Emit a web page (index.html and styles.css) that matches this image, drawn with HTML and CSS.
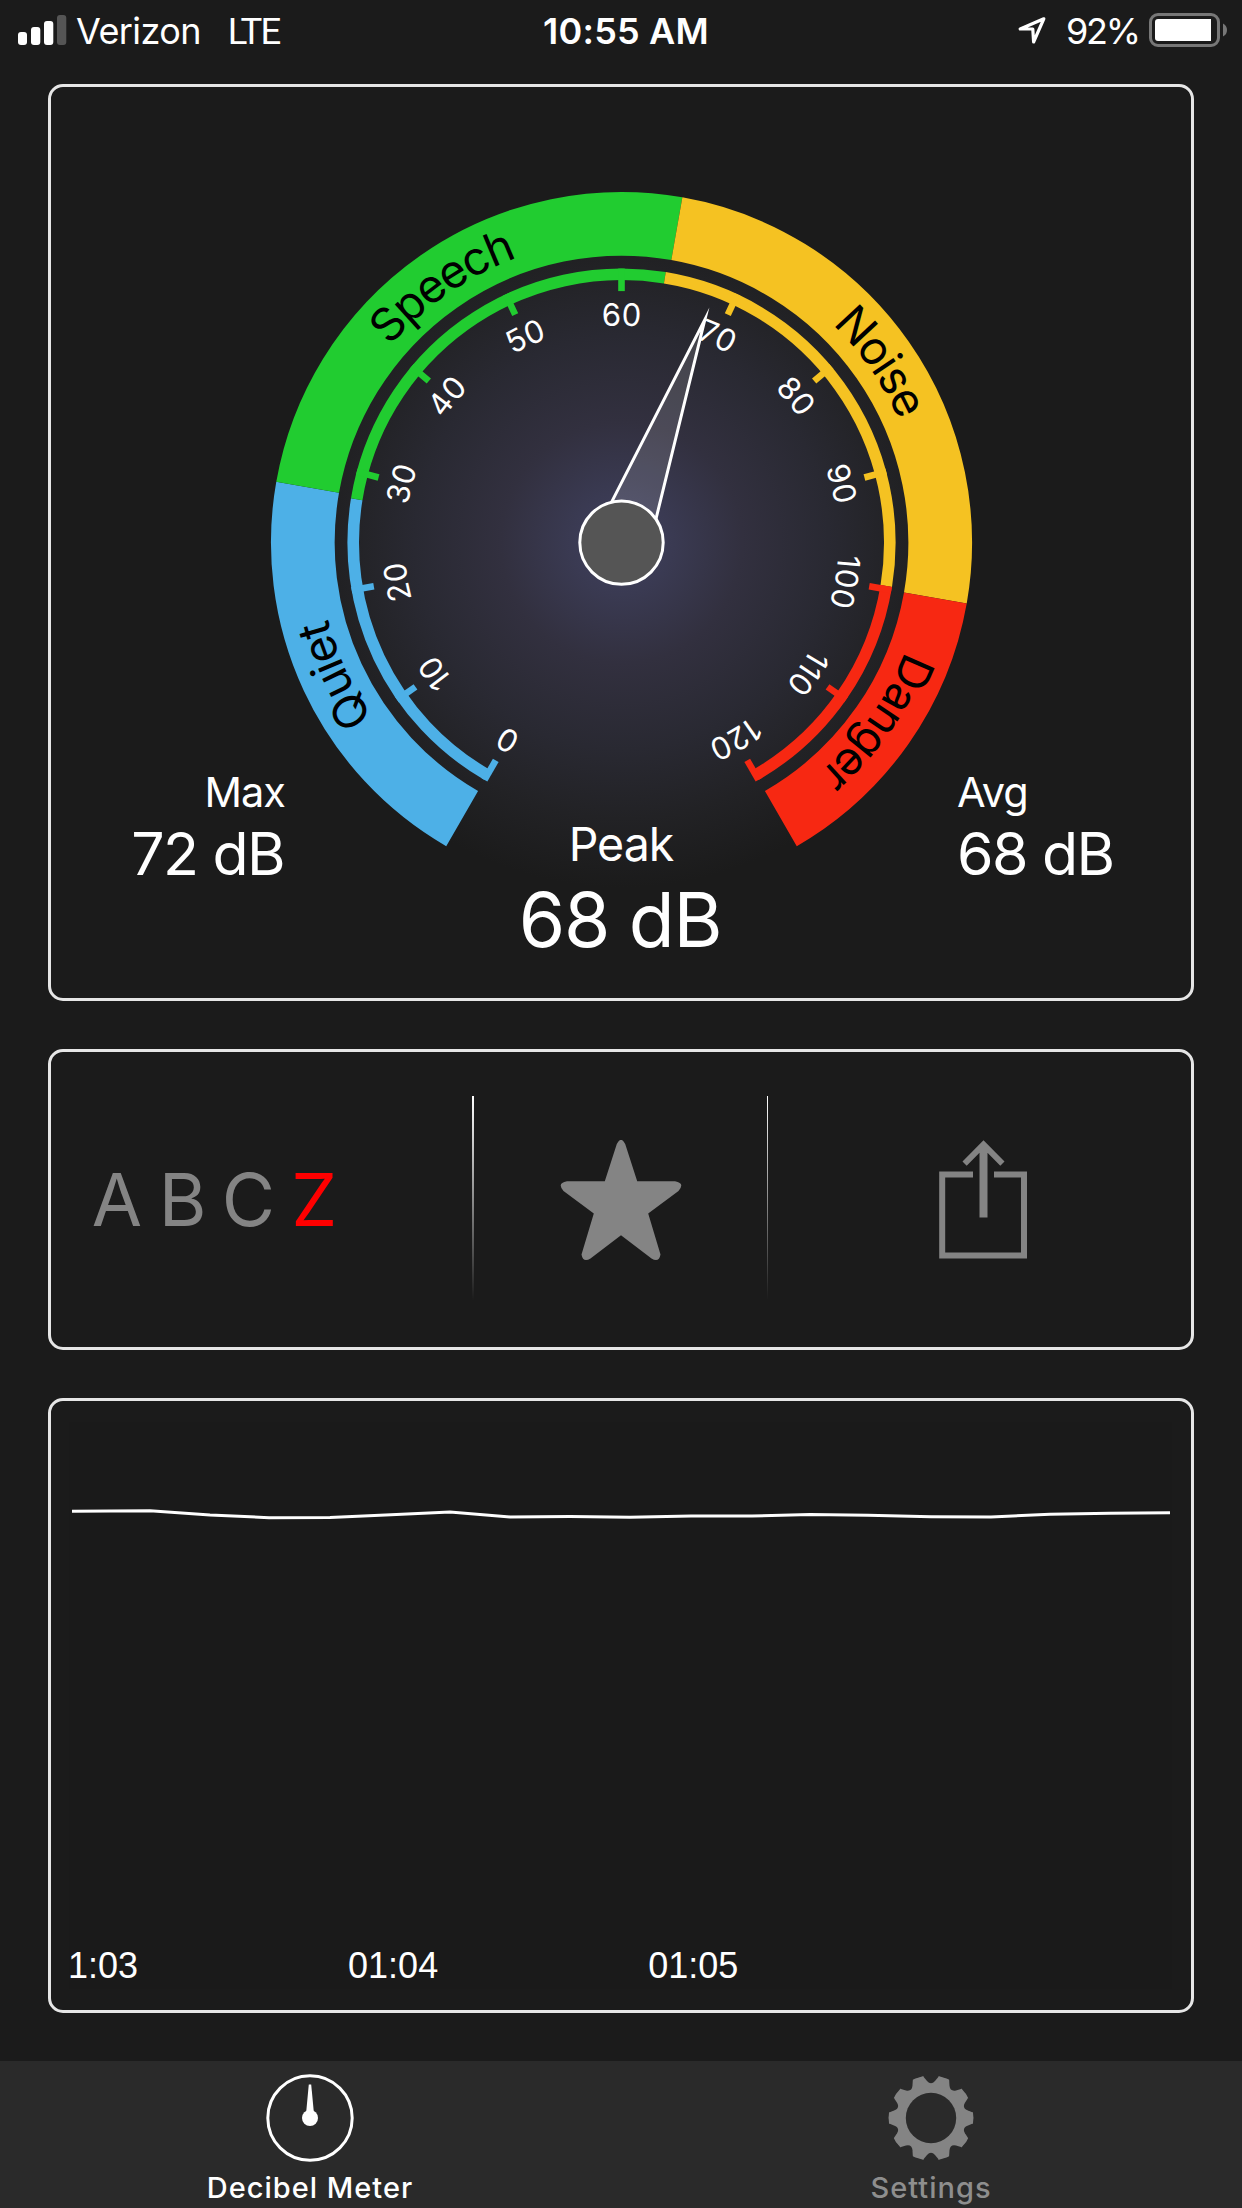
FILE: index.html
```html
<!DOCTYPE html>
<html lang="en">
<head>
<meta charset="utf-8">
<title>Decibel Meter</title>
<link rel="stylesheet" href="styles.css">
</head>
<body>
<div class="app">
  <header class="status">
    <div class="status-left">
      <svg class="signal" width="49" height="30" viewBox="0 0 49 30">
        <rect x="0" y="17" width="9" height="13" rx="3"/>
        <rect x="13" y="12" width="9.3" height="18" rx="3"/>
        <rect x="26" y="6" width="9.3" height="24" rx="3"/>
        <rect class="dim" x="39" y="0" width="9.3" height="30" rx="3"/>
      </svg>
      <span class="carrier">Verizon</span>
      <span class="network">LTE</span>
    </div>
    <div class="clock">10:55 AM</div>
    <div class="status-right">
      <svg class="locate" width="30" height="30" viewBox="0 0 30 30">
        <path d="M26.800 3.800 3.200 14H15.800L16.600 27z"/>
      </svg>
      <span class="percent">92%</span>
      <svg class="battery" width="79" height="34" viewBox="0 0 79 34">
        <rect class="shell" x="1.5" y="1.5" width="68" height="31" rx="7.5"/>
        <path class="charge" d="M9 6H62V28H9a3 3 0 0 1-3-3V9a3 3 0 0 1 3-3z"/>
        <path class="nub" d="M74 10.5q4 2 4 6.5t-4 6.500z"/>
      </svg>
    </div>
  </header>

  <main class="panels">
    <section class="card meter">
      <svg class="gauge" width="1140" height="911" viewBox="-570.500 -455.600 1140 911">
        <defs>
          <radialGradient id="glow" gradientUnits="userSpaceOnUse" cx="0" cy="0" r="345">
            <stop offset="0" stop-color="#40405f"/>
            <stop offset=".15" stop-color="#3a3a52"/>
            <stop offset=".35" stop-color="#32303f"/>
            <stop offset=".6" stop-color="#292932"/>
            <stop offset=".8" stop-color="#222225"/>
            <stop offset="1" stop-color="#1b1b1b"/>
          </radialGradient>
          <path id="scale-line" d="M-217 0A217 217 0 0 1 217 0"/>
          <path id="zone-line" d="M-303.500 0A303.500 303.500 0 0 1 303.500 0"/>
          <path id="tick" d="M0 -274V-251.500"/>
        </defs>
        <circle r="345" fill="url(#glow)"/>

        <g class="zones">
          <path class="quiet" d="M-159.350 275.990A318.700 318.700 0 0 1 -313.860 -55.340"/>
          <path class="speech" d="M-313.860 -55.340A318.700 318.700 0 0 1 55.340 -313.860"/>
          <path class="noise" d="M55.340 -313.860A318.700 318.700 0 0 1 313.860 55.340"/>
          <path class="danger" d="M313.860 55.340A318.700 318.700 0 0 1 159.350 275.990"/>
        </g>
        <g class="rim">
          <path class="quiet" d="M-134.150 232.350A268.300 268.300 0 0 1 -264.770 -43.360"/>
          <path class="speech" d="M-264.770 -43.360A268.300 268.300 0 0 1 43.360 -264.770"/>
          <path class="noise" d="M43.360 -264.770A268.300 268.300 0 0 1 264.770 43.360"/>
          <path class="danger" d="M264.770 43.360A268.300 268.300 0 0 1 134.150 232.350"/>
        </g>
        <g class="ticks">
          <use class="quiet" href="#tick" transform="rotate(-150)"/>
          <use class="quiet" href="#tick" transform="rotate(-125)"/>
          <use class="quiet" href="#tick" transform="rotate(-100)"/>
          <use class="speech" href="#tick" transform="rotate(-75)"/>
          <use class="speech" href="#tick" transform="rotate(-50)"/>
          <use class="speech" href="#tick" transform="rotate(-25)"/>
          <use class="speech" href="#tick"/>
          <use class="noise" href="#tick" transform="rotate(25)"/>
          <use class="noise" href="#tick" transform="rotate(50)"/>
          <use class="noise" href="#tick" transform="rotate(75)"/>
          <use class="danger" href="#tick" transform="rotate(100)"/>
          <use class="danger" href="#tick" transform="rotate(125)"/>
          <use class="danger" href="#tick" transform="rotate(150)"/>
        </g>
        <g class="scale-text">
          <text transform="rotate(-150)"><textPath href="#scale-line" startOffset="50%">0</textPath></text>
          <text transform="rotate(-125)"><textPath href="#scale-line" startOffset="50%">10</textPath></text>
          <text transform="rotate(-100)"><textPath href="#scale-line" startOffset="50%">20</textPath></text>
          <text transform="rotate(-75)"><textPath href="#scale-line" startOffset="50%">30</textPath></text>
          <text transform="rotate(-50)"><textPath href="#scale-line" startOffset="50%">40</textPath></text>
          <text transform="rotate(-25)"><textPath href="#scale-line" startOffset="50%">50</textPath></text>
          <text><textPath href="#scale-line" startOffset="50%">60</textPath></text>
          <text transform="rotate(25)"><textPath href="#scale-line" startOffset="50%">70</textPath></text>
          <text transform="rotate(50)"><textPath href="#scale-line" startOffset="50%">80</textPath></text>
          <text transform="rotate(75)"><textPath href="#scale-line" startOffset="50%">90</textPath></text>
          <text transform="rotate(100)"><textPath href="#scale-line" startOffset="50%">100</textPath></text>
          <text transform="rotate(125)"><textPath href="#scale-line" startOffset="50%">110</textPath></text>
          <text transform="rotate(150)"><textPath href="#scale-line" startOffset="50%">120</textPath></text>
        </g>
        <g class="zone-text">
          <text transform="rotate(-115)"><textPath href="#zone-line" startOffset="50%">Quiet</textPath></text>
          <text transform="rotate(-35)"><textPath href="#zone-line" startOffset="50%">Speech</textPath></text>
          <text transform="rotate(55)"><textPath href="#zone-line" startOffset="50%">Noise</textPath></text>
          <text transform="rotate(125)"><textPath href="#zone-line" startOffset="50%">Danger</textPath></text>
        </g>
        <path class="needle" d="M-24 -30L0 -238 24.500 -30" transform="rotate(20.500)"/>
        <circle class="hub" r="41.700"/>
      </svg>
      <div class="readings">
        <div class="reading max"><span class="name">Max</span><span class="value">72 dB</span></div>
        <div class="reading peak"><span class="name">Peak</span><span class="value">68 dB</span></div>
        <div class="reading avg"><span class="name">Avg</span><span class="value">68 dB</span></div>
      </div>
    </section>

    <section class="card controls">
      <div class="weighting">
        <span>A</span><span>B</span><span>C</span><span class="selected">Z</span>
      </div>
      <div class="divider"></div>
      <div class="action favorite">
        <svg width="122" height="121" viewBox="560 1140 122 121">
          <path d="M616.800 1144Q621 1135.500 625.200 1144L637.200 1181.200H675Q685.500 1183 678.500 1191L648.200 1213.500 660.500 1254.500Q659 1263 651.500 1258.500L621 1235.200 590.500 1258.500Q583 1263 581.500 1254.500L593.800 1213.500 563.500 1191Q556.500 1183 567 1181.200H604.800z"/>
        </svg>
      </div>
      <div class="divider"></div>
      <div class="action share">
        <svg width="88" height="119" viewBox="939 1140.500 88 119">
          <path d="M983.500 1140.700 1004.500 1162 1000.300 1166.200 987.500 1153.200V1218H979.500V1153.200L966.700 1166.200 962.500 1162z"/>
          <path d="M939.200 1172H973V1178H945.200V1253H1021V1178H994V1172H1027V1259H939.200z"/>
        </svg>
      </div>
    </section>

    <section class="card history">
      <div class="plot">
        <svg width="1098" height="531" viewBox="72 1422 1098 531">
          <polyline points="72,1511.300 150,1510.700 210,1515 269,1517.700 330,1517.500 391,1514.700 450,1512 510,1517 570,1516.600 630,1517.300 691,1516 752,1516 810,1514.600 868,1515.300 931,1516.700 991,1517 1050,1514.200 1110,1513.300 1170,1512.700"/>
        </svg>
        <div class="times"><span>1:03</span><span>01:04</span><span>01:05</span></div>
      </div>
    </section>
  </main>

  <nav class="tabs">
    <a class="tab active">
      <svg width="88" height="88" viewBox="-44 -44 88 88">
        <circle class="dial" r="42.200"/>
        <path d="M-1.200 -33.500H1.200L3.800 -6H-3.800z"/>
        <circle r="8"/>
      </svg>
      <span>Decibel Meter</span>
    </a>
    <a class="tab">
      <svg width="88" height="88" viewBox="-44 -44 88 88">
        <defs>
          <path id="notch" d="M-8 -44 -7.300 -41 -4 -37Q0 -32.500 4 -37L7.300 -41 8 -44z"/>
          <mask id="cog" maskUnits="userSpaceOnUse" x="-44" y="-44" width="88" height="88">
            <circle r="42.500" fill="#fff"/>
            <circle r="25.200" fill="#000"/>
            <use href="#notch"/>
            <use href="#notch" transform="rotate(36)"/>
            <use href="#notch" transform="rotate(72)"/>
            <use href="#notch" transform="rotate(108)"/>
            <use href="#notch" transform="rotate(144)"/>
            <use href="#notch" transform="rotate(180)"/>
            <use href="#notch" transform="rotate(216)"/>
            <use href="#notch" transform="rotate(252)"/>
            <use href="#notch" transform="rotate(288)"/>
            <use href="#notch" transform="rotate(324)"/>
          </mask>
        </defs>
        <circle class="gear" r="43" mask="url(#cog)"/>
      </svg>
      <span>Settings</span>
    </a>
  </nav>
</div>
</body>
</html>
```
FILE: styles.css
```css
* { box-sizing: border-box; }

body {
  margin: 0;
  background: #1b1b1b;
  color: #fff;
  font-family: Inter, "Liberation Sans", sans-serif;
}

svg { display: block; flex: none; }

.app {
  display: flex;
  flex-direction: column;
  width: 1242px;
  height: 2208px;
}

/* Status bar */
.status {
  display: grid;
  grid-template-columns: 1fr auto 1fr;
  align-items: start;
  height: 84px;
  font-size: 36px;
  line-height: 36px;
  white-space: nowrap;
}

.status-left,
.status-right { display: flex; align-items: flex-start; }

.status-left { padding: 13px 0 0 18px; }
.status-right { justify-content: flex-end; padding: 13px 14px 0 0; }
.signal { margin-top: 2px; fill: #fff; }
.signal .dim { fill: #555; }
.carrier { margin-left: 9px; letter-spacing: -.6px; }
.network { margin-left: 27px; padding-top: 1px; font-family: Roboto, sans-serif; font-size: 36.5px; letter-spacing: -2px; }
.clock { padding: 13px 0 0 10px; font-weight: 600; letter-spacing: .2px; }
.locate { margin-top: 2px; fill: none; stroke: #fff; stroke-width: 3.2; stroke-linejoin: round; }
.percent { margin: 0 10px 0 19px; letter-spacing: -2.2px; }
.battery .shell { fill: none; stroke: #777; stroke-width: 3; }
.battery .charge { fill: #fff; }
.battery .nub { fill: #777; }

/* Panels */
.panels {
  display: flex;
  flex-direction: column;
  gap: 48px;
  padding: 0 48px 48px;
}

.card {
  border: 3px solid #e6e6e6;
  border-radius: 15px;
}

/* Sound level gauge */
.meter { display: grid; height: 917px; }
.gauge, .readings { grid-area: 1 / 1; }

.quiet { stroke: #4db0e7; }
.speech { stroke: #21cc30; }
.noise { stroke: #f5c222; }
.danger { stroke: #f72812; }
.zones { fill: none; stroke-width: 63.7; }
.rim { fill: none; stroke-width: 11.6; }
.ticks { fill: none; stroke-width: 6.6; }

.scale-text { fill: #fff; font-size: 31px; text-anchor: middle; }
.zone-text { fill: #000; font-size: 46px; letter-spacing: -1.5px; text-anchor: middle; }
.needle { fill: rgba(255, 255, 255, .13); stroke: #fff; stroke-width: 3; stroke-miterlimit: 20; }
.hub { fill: #555; stroke: #fff; stroke-width: 3; }

.readings {
  display: grid;
  grid-template-columns: 234px 1fr 234px;
  align-content: start;
  padding-top: 680px;
}

.reading { display: flex; flex-direction: column; gap: 1.5px; white-space: nowrap; }
.reading .name { font-size: 41.5px; line-height: 50px; letter-spacing: -1px; }
.reading .value { font-size: 59px; line-height: 70px; letter-spacing: -1.6px; }
.reading.max { align-items: flex-end; }
.max .value { margin-right: 1px; }
.reading.avg { align-items: flex-start; }
.reading.peak { align-items: center; gap: 3px; padding-top: 49px; }
.peak .name { font-size: 46.5px; line-height: 56px; letter-spacing: -1px; }
.peak .value { margin-right: 2px; font-size: 75px; line-height: 90px; letter-spacing: -1.3px; }

/* Controls */
.controls { display: flex; height: 301px; padding-top: 44px; }

.weighting {
  display: grid;
  grid-template-columns: repeat(4, 65.8px);
  width: 421px;
  padding: 59px 0 0 33px;
  color: #848484;
  font-size: 73px;
  line-height: 90px;
}

.weighting span { text-align: center; }
.weighting .selected { color: #f00; }

.divider {
  width: 1.5px;
  height: 204px;
  background: linear-gradient(#fff, #fff0);
}

.action { fill: #848484; padding-top: 44px; }
.favorite { width: 293px; padding-left: 86px; }
.share { padding-left: 171px; }

/* History chart */
.history { height: 615px; padding: 21px 19px; }
.plot { height: 567px; background: #1a1a1a; margin-left: -1px; }
.plot svg { margin-left: 3px; }
.plot polyline { fill: none; stroke: #fff; stroke-width: 3; }

.times {
  display: flex;
  gap: 210px;
  margin: -7px 0 0 -1px;
  font: 36px/40px "Liberation Sans", sans-serif;
}

/* Tab bar */
.tabs {
  display: grid;
  grid-template-columns: 1fr 1fr;
  height: 147px;
  background: #2a2a2a;
}

.tab {
  display: flex;
  flex-direction: column;
  align-items: center;
  padding: 13px 1px 0 0;
  color: #8e8e8e;
  font-size: 29px;
  font-weight: 500;
  line-height: 36px;
  letter-spacing: 1px;
}

.tab span { margin-top: 8px; }
.tab.active { color: #fff; fill: #fff; }
.dial { fill: none; stroke: #fff; stroke-width: 3; }
.gear { fill: #848484; }
```
